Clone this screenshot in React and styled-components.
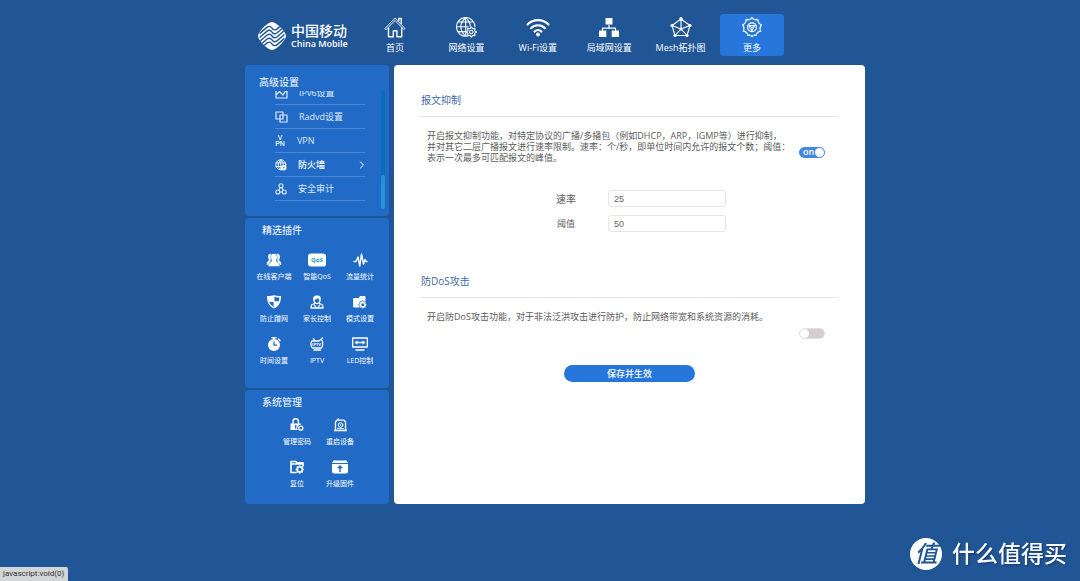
import React, { useState } from "react";
import styled, { createGlobalStyle, css } from "styled-components";

const GlobalStyle = createGlobalStyle`
  * { box-sizing: border-box; }
  body {
    margin: 0;
    min-height: 100vh;
    background: #205596;
    font-family: "Open Sans", "Noto Sans CJK SC", sans-serif;
    font-size: 9px;
    color: #fff;
  }
  button, input { font-family: inherit; }
`;

const Page = styled.div`
  display: flex;
  justify-content: center;
  padding-left: 30px;
`;

const Shell = styled.div`
  width: 100%;
  max-width: 620px;
`;

const Header = styled.header`
  display: flex;
  align-items: flex-start;
  gap: 18px;
  padding: 14px 81px 9px 13px;
`;

const Brand = styled.a`
  display: flex;
  align-items: center;
  gap: 5px;
  width: 87px;
  height: 42px;
  padding-top: 2px;
  color: #fff;
  text-decoration: none;
  white-space: nowrap;
  svg { flex: none; }
`;

const BrandText = styled.span`
  display: flex;
  flex-direction: column;
`;

const BrandName = styled.span`
  font: 500 14px/15px "Noto Sans CJK SC", sans-serif;
`;

const BrandLatin = styled.span`
  font: 600 9px/12px "Open Sans", sans-serif;
`;

const TopNav = styled.nav`
  display: flex;
  flex: 1;
  justify-content: space-between;
`;

const NavButton = styled.button`
  display: flex;
  flex-direction: column;
  align-items: center;
  gap: 3px;
  width: 64px;
  height: 42px;
  padding: 2px 0 0;
  border: 0;
  border-radius: 4px;
  background: ${(p) => (p.$active ? "#2676dc" : "transparent")};
  color: #fff;
  font-size: 9px;
  line-height: 14px;
  white-space: nowrap;
  cursor: pointer;
`;

const Columns = styled.div`
  display: flex;
  gap: 5px;
`;

const Sidebar = styled.aside`
  display: flex;
  flex-direction: column;
  flex: none;
  gap: 2px;
  width: 144px;
`;

const Panel = styled.section`
  border-radius: 4px;
  background: #216bc7;
  padding: ${(p) => p.$padding};
`;

const PanelTitle = styled.h2`
  margin: 0;
  padding-left: ${(p) => p.$indent};
  font-size: 10px;
  line-height: 16px;
  font-weight: 400;
`;

const ScrollArea = styled.div`
  display: flex;
  justify-content: space-between;
  height: 118px;
  margin-top: 1px;
  padding: 0 4px 0 30px;
`;

const MenuList = styled.ul`
  display: flex;
  flex-direction: column;
  justify-content: flex-end;
  width: 90px;
  margin: 0;
  padding: 0 0 8px;
  list-style: none;
  overflow: hidden;
`;

const MenuItem = styled.li`
  flex: none;
  border-bottom: 1px solid #4a88d6;
`;

const MenuLink = styled.a`
  display: flex;
  align-items: center;
  height: 23px;
  gap: 11px;
  color: #dfeafa;
  font-size: 9px;
  line-height: 14px;
  text-decoration: none;
  ${(p) => p.$current && css`color: #fff; font-weight: 500;`}
  svg:last-child:not(:first-child) { margin-left: auto; }
`;

const Track = styled.div`
  display: flex;
  align-items: flex-end;
  width: 4px;
  border-radius: 2px;
  background: #0a6cbd;
`;

const Thumb = styled.div`
  width: 4px;
  height: 34px;
  border-radius: 2px;
  background: #2593dc;
`;

const PluginGrid = styled.div`
  display: grid;
  grid-template-columns: repeat(${(p) => p.$columns}, 43px);
  grid-auto-rows: 42px;
  justify-content: center;
  margin-top: ${(p) => p.$top};
  padding-left: ${(p) => p.$shift};
`;

const PluginButton = styled.button`
  display: flex;
  flex-direction: column;
  align-items: center;
  gap: 4px;
  padding: 0;
  border: 0;
  background: none;
  color: #fff;
  font-size: 7px;
  line-height: 10px;
  white-space: nowrap;
  cursor: pointer;
`;

const Main = styled.main`
  flex: 1;
  min-width: 0;
  padding: 27px 27px 0;
  border-radius: 4px;
  background: #fff;
  color: #5c5c5c;
`;

const SectionTitle = styled.h1`
  margin: 0;
  padding-bottom: 8px;
  border-bottom: 1px solid #e4e4e4;
  color: #3f6aa8;
  font-size: 10px;
  line-height: 16px;
  font-weight: 400;
`;

const SettingRow = styled.div`
  display: flex;
  justify-content: space-between;
  min-height: ${(p) => p.$height};
  padding: 13px 13px 0 6px;
`;

const Description = styled.p`
  margin: 0;
  font-size: 9px;
  line-height: 11px;
  white-space: nowrap;
`;

const Switch = styled.label`
  position: relative;
  flex: none;
  width: 26px;
  height: 11px;
  margin-top: 17px;
  padding-left: 3px;
  border: 1px solid ${(p) => (p.$on ? "#4388e0" : "#e2dede")};
  border-radius: 6px;
  background: ${(p) => (p.$on ? "#4388e0" : "#d3cdce")};
  color: #fff;
  font-size: 9px;
  line-height: 8px;
  font-weight: 600;
  cursor: pointer;
  input {
    position: absolute;
    inset: 0;
    margin: 0;
    opacity: 0;
  }
  &::after {
    content: "";
    position: absolute;
    top: 0;
    ${(p) => (p.$on ? "right: 0;" : "left: 0;")}
    width: 9px;
    height: 9px;
    border-radius: 50%;
    background: #fff;
  }
`;

const Fields = styled.div`
  display: grid;
  grid-template-columns: 84px 118px;
  grid-auto-rows: 17px;
  row-gap: 8px;
  justify-content: center;
  align-items: center;
  padding-right: 9px;
  margin-bottom: 41px;
`;

const FieldLabel = styled.label`
  text-align: center;
  font-size: ${(p) => (p.$large ? "10px" : "9px")};
  line-height: 16px;
`;

const TextInput = styled.input`
  width: 100%;
  height: 17px;
  padding: 0 5px;
  border: 1px solid #e6e6e6;
  border-radius: 3px;
  background: #fff;
  color: #666;
  font: 9px "Liberation Sans", sans-serif;
`;

const SaveButton = styled.button`
  display: block;
  width: 131px;
  height: 17px;
  margin: 0 auto;
  padding: 0;
  border: 0;
  border-radius: 9px;
  background: #2676dc;
  color: #fff;
  font-size: 9px;
  line-height: 17px;
  font-weight: 500;
  cursor: pointer;
`;

const StatusBubble = styled.div`
  position: fixed;
  left: 0;
  bottom: 0;
  height: 14px;
  padding: 0 4px 0 3px;
  border-top-right-radius: 2px;
  background: #d2d4d6;
  color: #333;
  font: 8px/14px Roboto, sans-serif;
`;

const Watermark = styled.div`
  position: fixed;
  right: 13px;
  bottom: 11px;
  display: flex;
  align-items: flex-start;
  gap: 10px;
  font: 500 23px/29px "Noto Sans CJK SC", sans-serif;
  text-shadow: 1px 1px 2px #123a6c;
`;

const Seal = styled.span`
  width: 32px;
  height: 32px;
  border-radius: 50%;
  background: #fff;
  color: #205596;
  font-style: italic;
  text-align: center;
  text-shadow: none;
`;

const Icon = ({ w = 20, h = 20, sw = 1, children }) => (
  <svg width={w} height={h} viewBox={`0 0 ${w} ${h}`} fill="none" stroke="currentColor"
    strokeWidth={sw} strokeLinecap="round" strokeLinejoin="round" aria-hidden="true">
    {children}
  </svg>
);

const cog = (cx, cy, r, teeth, depth) => {
  const pts = [];
  for (let i = 0; i < teeth * 4; i++) {
    const a = ((i - 0.5) / (teeth * 4)) * Math.PI * 2;
    const rad = i % 4 < 2 ? r : r - depth;
    pts.push(`${(cx + Math.cos(a) * rad).toFixed(2)} ${(cy + Math.sin(a) * rad).toFixed(2)}`);
  }
  return `M${pts.join("L")}Z`;
};

const Logo = () => (
  <svg width="28" height="28" viewBox="0 0 27 27" fill="none" aria-hidden="true">
    <defs>
      <clipPath id="seal">
        <path d="M13.500 0C17.500 0 27 9.500 27 13.500S17.500 27 13.500 27 0 17.500 0 13.500 9.500 0 13.500 0Z" />
      </clipPath>
    </defs>
    <g clipPath="url(#seal)">
      <rect width="27" height="27" fill="#fff" />
      <g stroke="#205596" strokeWidth="1.400" strokeLinejoin="round">
        {[-7.6, -3.8, 0, 3.8, 7.6].map((dy) => (
          <path
            key={dy}
            d="M1.500 18.800L8.500 12.800Q11.500 10.500 13.500 13.500T18.500 14.200L25.500 8.200"
            transform={`translate(0 ${dy})`}
          />
        ))}
      </g>
    </g>
  </svg>
);

const HomeIcon = () => (
  <Icon w={22} h={22}>
    <path d="M1 12.500L11 2l10 10.500-1.200 1L11 4.500 2.200 13.500Z" strokeWidth=".9" />
    <path d="M4.500 12v8.700h4.800v-6h3.600v6h4.800V12" strokeWidth="1.400" />
    <path d="M14.800 5V2.500h2.400v5" strokeWidth="1.300" />
  </Icon>
);
const GlobeIcon = () => (
  <Icon w={22} h={22} sw={1.1}>
    <path d="M12.500 20A9.300 9.300 0 1 1 20 10.500M10.700 1.700v18.300M1.500 10.800H13M3 6h15.500M3 15.600h9" />
    <path d="M10.700 1.700c-6.500 5.300-6.500 13 0 18.400M10.700 1.700c2.800 2.400 4.300 5.300 4.500 8.300" />
    <path d={cog(16.3, 16, 4.9, 8, 1.2)} fill="#205596" />
    <circle cx="16.300" cy="16" r="1.700" />
  </Icon>
);
const WifiIcon = () => (
  <Icon w={24} h={22} sw={2.1}>
    <path d="M1.500 8.500C7.300 2.700 16.700 2.700 22.500 8.500M5 12.200c4-3.900 10-3.900 14 0M8.500 15.600c2.100-1.900 4.900-1.900 7 0" />
    <circle cx="12" cy="18.500" r="1.900" fill="currentColor" stroke="none" />
  </Icon>
);
const LanIcon = () => (
  <Icon w={22} h={22}>
    <path d="M11 9v3.500M4.500 14.500v-2.300h13v2.300" strokeWidth="1.200" />
    <path d="M7.500 2h7v6.500h-7ZM1 14.500h7.300V21H1ZM13.700 14.500H21V21h-7.300Z" fill="currentColor" stroke="none" />
  </Icon>
);
const MeshIcon = () => (
  <Icon w={22} h={22} sw={1.1}>
    <path d="M11 3L20 9.500 17 19.500H5L2 9.500ZM11 13V3M11 13L2 9.500M11 13l9-3.500M11 13l6 6.500M11 13l-6 6.500" />
    <g fill="currentColor" stroke="none">
      <circle cx="11" cy="2.800" r="1.700" /><circle cx="20" cy="9.500" r="1.600" />
      <circle cx="2" cy="9.500" r="1.600" /><circle cx="17" cy="19.500" r="1.600" />
      <circle cx="5" cy="19.500" r="1.600" /><circle cx="11" cy="13" r="1.500" />
    </g>
  </Icon>
);
const MoreIcon = () => (
  <Icon w={22} h={22} sw={1.2}>
    <path d="M11 1.500Q13 4.700 16.900 3.400 16.700 7.300 20.500 9 18 11.500 19.700 15.200 15.800 15.700 15 19.500 12.500 18.500 11 20.600 9.500 18.500 7 19.500 6.200 15.700 2.300 15.200 4 11.500 1.500 9 5.300 7.300 5.100 3.400 9 4.700 11 1.500Z" />
    <circle cx="11" cy="11.200" r="4.400" />
    <path d="M8 9.500h6L11 14.500ZM11 11.500v3M8.500 10l2.500 1.500 2.500-1.500" strokeWidth=".9" />
  </Icon>
);

const Ipv6Icon = () => (
  <Icon w={13} h={12} sw={1.2}><path d="M3 1H1v10h11V1h-2M1 8l3.500-3.500L8 8l2.500-4L12 6" /></Icon>
);
const CopyIcon = () => (
  <Icon w={13} h={12} sw={1.2}><path d="M1 1h7v7H1ZM5 4h7v7H5Z" /></Icon>
);
const VpnIcon = () => (
  <svg width="11" height="12" viewBox="0 0 11 12" fill="currentColor" aria-hidden="true"
    fontFamily="Liberation Sans, sans-serif" fontWeight="700" fontSize="7" textAnchor="middle">
    <text x="5" y="5">V</text>
    <text x="5" y="11">PN</text>
  </svg>
);
const FirewallIcon = () => (
  <Icon w={12} h={12} sw={0.9}>
    <circle cx="5.800" cy="5.800" r="5" /><path d="M1 4h9.600M1 7.500h9.600M5.800.8v10M5.800.8c-3.500 3-3.500 7 0 10M5.800.8c3.500 3 3.500 7 0 10" />
    <circle cx="8.800" cy="8.800" r="2.700" fill="currentColor" stroke="none" />
    <circle cx="8.800" cy="8.800" r=".8" fill="#216bc7" stroke="none" />
  </Icon>
);
const AuditIcon = () => (
  <Icon w={12} h={12} sw={1.1}>
    <circle cx="6" cy="2.800" r="2" /><circle cx="2.800" cy="9" r="2" /><circle cx="9.200" cy="9" r="2" />
    <path d="M5.200 4.800L3.800 7.200M6.800 4.800l1.400 2.400M4.800 9h2.400" />
  </Icon>
);
const Chevron = () => <Icon w={6} h={8}><path d="M1.500 1l3 3-3 3" /></Icon>;

const UsersIcon = () => (
  <Icon w={18} h={16}>
    <g fill="currentColor" stroke="none">
      <path d="M6.500 2C3.500 1 2.500 4 3.500 6.500 4 8 4 9 2.200 10 2 11 1.500 12 2 13H5ZM11.500 2c3-1 4 2 3 4.500-.5 1.500-.5 2.500 1.300 3.500.2 1 .7 2 .2 3h-3Z" />
      <path d="M9 1.500c3.300 0 3.800 3 2.900 5.500-.8 2-.5 2.800 1.300 3.600 1.300.6 1.500 2 1.500 3.800H3.300c0-1.800.2-3.200 1.500-3.800C6.600 9.800 6.900 9 6.100 7 5.200 4.500 5.700 1.500 9 1.500Z" stroke="#216bc7" strokeWidth=".5" />
    </g>
  </Icon>
);
const QosIcon = () => (
  <svg width="18" height="16" viewBox="0 0 18 16" aria-hidden="true">
    <path d="M2 1.500h13.500L18 3v10l-1.500 1.500H2L0 13V3Z" fill="#fff" />
    <text x="9" y="10" textAnchor="middle" fill="#18a5bd" fontSize="6" fontWeight="700">QoS</text>
  </svg>
);
const PulseIcon = () => (
  <Icon w={16} h={16} sw={1.4}><path d="M2 9.500h2L6 5l1.800 9L9.500 2l2 10L13 7.500l1 2h1" /></Icon>
);
const ShieldIcon = () => (
  <Icon w={16} h={16}>
    <path d="M1 2c4.500 0 6-.8 7-.8s2.500.8 7 .8c0 6.500-2 10-7 12.500C3 12 1 8.500 1 2Z" fill="#fff" stroke="none" />
    <path d="M8.400 2.700c1 .5 2.500.7 5 .8-.1 1.500-.2 2.500-.6 3.700H8.400ZM3.200 8.100h4.400v4.800C5.300 11.700 4 10.300 3.200 8.100Z" fill="#216bc7" stroke="none" />
  </Icon>
);
const ParentIcon = () => (
  <Icon w={16} h={16}>
    <path d="M8 1.500c-3.400 0-4.200 2-3.800 4.500.3 2.300 1.700 4.200 3.800 4.200s3.500-1.900 3.800-4.200C12.200 3.500 11.400 1.500 8 1.500Z" fill="#fff" stroke="none" />
    <path d="M5.500 6.500C6 4.800 8 5.500 9 4c.3 1 1 1.700 1.500 2.200-.4 1.600-1.300 2.800-2.500 2.800S6 8 5.500 6.500Z" fill="#216bc7" stroke="none" />
    <path d="M5.500 9.500L2.500 11 2 14h12l-.5-3-3-1.500M5.500 11.200L7 13.500M10.500 11.200L9 13.500" strokeWidth="1.300" />
  </Icon>
);
const FolderCogIcon = () => (
  <Icon w={16} h={16}>
    <path d="M2 4.500h5L8 2.500h5v2.500H8.500L7.800 13H2Z" fill="#fff" stroke="#fff" />
    <path d="M8 5h5.500v4H8Z" fill="#fff" stroke="none" />
    <path d={cog(10.8, 10.8, 4.2, 8, 0.9)} fill="#fff" stroke="#216bc7" strokeWidth=".8" />
    <circle cx="10.800" cy="10.800" r="1.500" fill="#216bc7" stroke="none" />
  </Icon>
);
const TimerIcon = () => (
  <Icon w={16} h={16}>
    <circle cx="8" cy="9" r="6" fill="#fff" stroke="none" />
    <path d="M6 1.700h4M8 2v2M12.500 3l1.500 1.500" strokeWidth="1.400" />
    <path d="M8 5.800v3.400h2.500" stroke="#216bc7" strokeWidth="1.200" />
  </Icon>
);
const TvIcon = () => (
  <svg width="16" height="16" viewBox="0 0 16 16" fill="none" stroke="#fff" strokeWidth="1.300" strokeLinecap="round" aria-hidden="true">
    <path d="M13 4.500c1 1 1 6.500-.7 7.500H3.700C1.500 11 1.500 6 3 5h6.500M6 5L4.500 2.500M10 5l3.500-3M5 14h6.500" />
    <text x="7.500" y="10" textAnchor="middle" fill="#fff" stroke="none" fontSize="4" fontWeight="700">IPTV</text>
  </svg>
);
const LedIcon = () => (
  <Icon w={16} h={16}>
    <path d="M.7 2h14.600v9H.7ZM4 14h8" strokeWidth="1.300" />
    <path d="M4 6.500h8" strokeWidth="1.500" />
    <path d="M2.500 6.500l3-2.200v4.400ZM13.500 6.500l-3-2.200v4.400Z" fill="#fff" stroke="none" />
  </Icon>
);
const LockCogIcon = () => (
  <Icon w={16} h={16}>
    <path d="M4 7V4.500a2.700 2.700 0 0 1 5.400 0V7" strokeWidth="1.400" />
    <path d="M1.500 6.500h10.300V13H1.500Z" fill="#fff" stroke="none" />
    <path d="M6.700 8.500v2.500" stroke="#216bc7" strokeWidth="1.300" />
    <circle cx="11.800" cy="11.200" r="3.500" fill="#216bc7" stroke="none" />
    <circle cx="11.800" cy="11.200" r="2" strokeWidth="1.300" />
  </Icon>
);
const RestartIcon = () => (
  <Icon w={16} h={16}>
    <path d="M3.500 13.500V5L5 3.200h7L13.500 5v8.500ZM2.500 13.500h12M4 4l2.500-2" strokeWidth="1.300" />
    <circle cx="8.500" cy="8" r="2.300" /><circle cx="8.500" cy="8" r=".7" fill="#fff" stroke="none" />
    <path d="M5.500 11.700h6" />
  </Icon>
);
const ResetIcon = () => (
  <Icon w={16} h={16}>
    <path d="M7 13.500H2V2.500h5l1 1.300h6V7M2 5h12" strokeWidth="1.600" />
    <path d={cog(10.8, 10.5, 4.2, 8, 0.8)} fill="#fff" stroke="none" />
    <circle cx="10.800" cy="10.500" r="1.800" fill="#216bc7" stroke="none" />
  </Icon>
);
const UpgradeIcon = () => (
  <Icon w={18} h={16}>
    <path d="M2.500 1.500h13L17 4H1ZM1 5h16v7.500q0 2-2 2H3q-2 0-2-2Z" fill="#fff" stroke="none" />
    <path d="M9 12.500V8" stroke="#216bc7" strokeWidth="1.500" /><path d="M5.800 9.200L9 6l3.200 3.200Z" fill="#216bc7" stroke="none" />
  </Icon>
);

const topItems = [
  ["首页", HomeIcon], ["网络设置", GlobeIcon], ["Wi-Fi设置", WifiIcon],
  ["局域网设置", LanIcon], ["Mesh拓扑图", MeshIcon], ["更多", MoreIcon],
];
const menuItems = [
  ["IPv6设置", Ipv6Icon], ["Radvd设置", CopyIcon], ["VPN", VpnIcon],
  ["防火墙", FirewallIcon, true], ["安全审计", AuditIcon],
];
const plugins = [
  ["在线客户端", UsersIcon], ["智能QoS", QosIcon], ["流量统计", PulseIcon],
  ["防止蹭网", ShieldIcon], ["家长控制", ParentIcon], ["模式设置", FolderCogIcon],
  ["时间设置", TimerIcon], ["IPTV", TvIcon], ["LED控制", LedIcon],
];
const systemItems = [
  ["管理密码", LockCogIcon], ["重启设备", RestartIcon],
  ["复位", ResetIcon], ["升级固件", UpgradeIcon],
];

const Plugins = ({ items, ...layout }) => (
  <PluginGrid {...layout}>
    {items.map(([label, Glyph]) => (
      <PluginButton key={label} type="button"><Glyph />{label}</PluginButton>
    ))}
  </PluginGrid>
);

const Toggle = ({ label, initial }) => {
  const [on, setOn] = useState(initial);
  return (
    <Switch $on={on}>
      <input type="checkbox" role="switch" aria-label={label} checked={on} onChange={() => setOn(!on)} />
      {on && "on"}
    </Switch>
  );
};

export default function App() {
  return (
    <>
      <GlobalStyle />
      <Page>
        <Shell>
          <Header>
            <Brand href="#">
              <Logo />
              <BrandText>
                <BrandName>中国移动</BrandName>
                <BrandLatin>China Mobile</BrandLatin>
              </BrandText>
            </Brand>
            <TopNav>
              {topItems.map(([label, Glyph]) => (
                <NavButton key={label} type="button" $active={label === "更多"}>
                  <Glyph />{label}
                </NavButton>
              ))}
            </TopNav>
          </Header>
          <Columns>
            <Sidebar>
              <Panel $padding="9px 0 7px">
                <PanelTitle $indent="14px">高级设置</PanelTitle>
                <ScrollArea>
                  <MenuList>
                    {menuItems.map(([label, Glyph, current]) => (
                      <MenuItem key={label}>
                        <MenuLink href="#" $current={current}>
                          <Glyph />{label}{current && <Chevron />}
                        </MenuLink>
                      </MenuItem>
                    ))}
                  </MenuList>
                  <Track><Thumb /></Track>
                </ScrollArea>
              </Panel>
              <Panel $padding="4px 0 10px">
                <PanelTitle $indent="17px">精选插件</PanelTitle>
                <Plugins items={plugins} $columns={3} $top="14px" $shift="0" />
              </Panel>
              <Panel $padding="4px 0 3px">
                <PanelTitle $indent="17px">系统管理</PanelTitle>
                <Plugins items={systemItems} $columns={2} $top="7px" $shift="3px" />
              </Panel>
            </Sidebar>
            <Main>
              <SectionTitle>报文抑制</SectionTitle>
              <SettingRow $height="73px">
                <Description>
                  开启报文抑制功能，对特定协议的广播/多播包（例如DHCP，ARP，IGMP等）进行抑制，<br />
                  并对其它二层广播报文进行速率限制。速率：个/秒，即单位时间内允许的报文个数；阈值：<br />
                  表示一次最多可匹配报文的峰值。
                </Description>
                <Toggle label="报文抑制" initial />
              </SettingRow>
              <Fields>
                <FieldLabel htmlFor="rate" $large>速率</FieldLabel>
                <TextInput id="rate" defaultValue="25" />
                <FieldLabel htmlFor="threshold">阈值</FieldLabel>
                <TextInput id="threshold" defaultValue="50" />
              </Fields>
              <SectionTitle as="h2">防DoS攻击</SectionTitle>
              <SettingRow $height="67px">
                <Description>开启防DoS攻击功能，对于非法泛洪攻击进行防护，防止网络带宽和系统资源的消耗。</Description>
                <Toggle label="防DoS攻击" initial={false} />
              </SettingRow>
              <SaveButton type="button">保存并生效</SaveButton>
            </Main>
          </Columns>
        </Shell>
      </Page>
      <StatusBubble>javascript:void(0)</StatusBubble>
      <Watermark><Seal>值</Seal>什么值得买</Watermark>
    </>
  );
}
